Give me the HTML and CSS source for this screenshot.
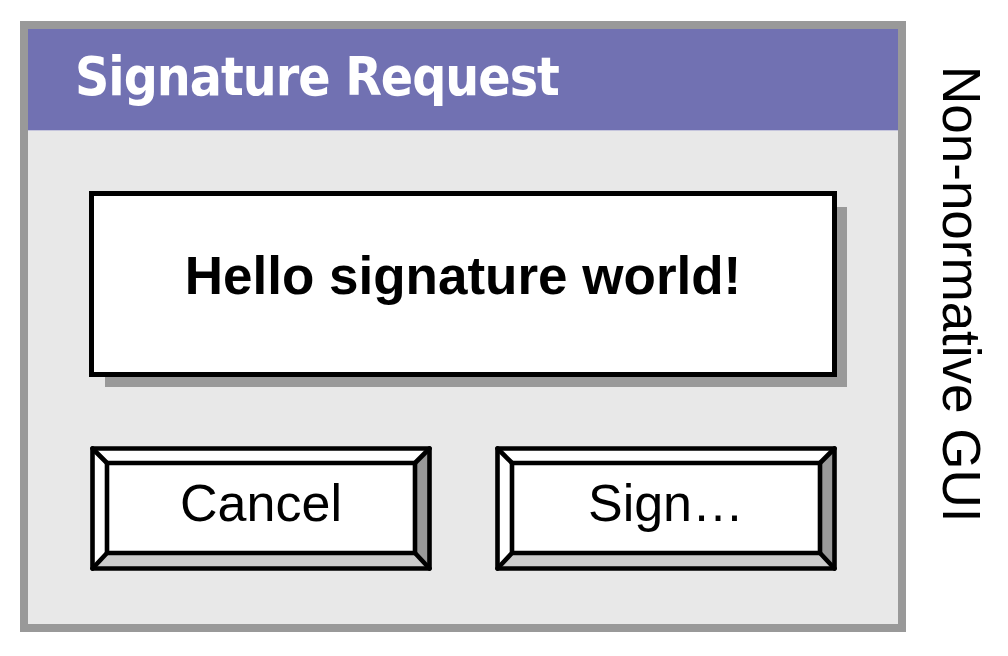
FILE: index.html
```html
<!DOCTYPE html>
<html>
<head>
<meta charset="utf-8">
<title>Signature Request</title>
<link rel="stylesheet" href="styles.css">
</head>
<body>
<div class="page">
  <div class="dialog">
    <div class="titlebar"><span class="title">Signature Request</span></div>
    <div class="content">
      <div class="message"><span class="message-text">Hello signature world!</span></div>
      <div class="buttons">
        <button class="btn" type="button">
          <svg class="bevel" width="342" height="125" viewBox="0 0 342 125">
            <polygon points="2,2 340,2 325,17 17,17" fill="#ffffff"/>
            <polygon points="2,2 17,17 17,107 2,123" fill="#ffffff"/>
            <polygon points="340,2 340,123 325,107 325,17" fill="#999999"/>
            <polygon points="2,123 340,123 325,107 17,107" fill="#cccccc"/>
            <rect x="17" y="17" width="308" height="90" fill="#ffffff"/>
            <g stroke="#000" stroke-width="4.6" stroke-linejoin="round" stroke-linecap="round" fill="none">
              <rect x="2.5" y="2.5" width="337" height="120"/>
              <rect x="17" y="17" width="308" height="90"/>
              <line x1="2.5" y1="2.5" x2="17" y2="17"/>
              <line x1="339.5" y1="2.5" x2="325" y2="17"/>
              <line x1="2.5" y1="122.5" x2="17" y2="107"/>
              <line x1="339.5" y1="122.5" x2="325" y2="107"/>
            </g>
          </svg>
          <span class="btn-label">Cancel</span>
        </button>
        <button class="btn" type="button">
          <svg class="bevel" width="342" height="125" viewBox="0 0 342 125">
            <polygon points="2,2 340,2 325,17 17,17" fill="#ffffff"/>
            <polygon points="2,2 17,17 17,107 2,123" fill="#ffffff"/>
            <polygon points="340,2 340,123 325,107 325,17" fill="#999999"/>
            <polygon points="2,123 340,123 325,107 17,107" fill="#cccccc"/>
            <rect x="17" y="17" width="308" height="90" fill="#ffffff"/>
            <g stroke="#000" stroke-width="4.6" stroke-linejoin="round" stroke-linecap="round" fill="none">
              <rect x="2.5" y="2.5" width="337" height="120"/>
              <rect x="17" y="17" width="308" height="90"/>
              <line x1="2.5" y1="2.5" x2="17" y2="17"/>
              <line x1="339.5" y1="2.5" x2="325" y2="17"/>
              <line x1="2.5" y1="122.5" x2="17" y2="107"/>
              <line x1="339.5" y1="122.5" x2="325" y2="107"/>
            </g>
          </svg>
          <span class="btn-label">Sign…</span>
        </button>
      </div>
    </div>
  </div>
  <div class="side-label">Non-normative GUI</div>
</div>
</body>
</html>
```

FILE: styles.css
```css
html, body {
  margin: 0;
  padding: 0;
  background: #ffffff;
}

body {
  width: 1008px;
  height: 656px;
  overflow: hidden;
  font-family: "Liberation Sans", Arial, sans-serif;
  color: #000;
}

.page {
  display: flex;
  align-items: flex-start;
  padding: 21px 0 0 20px;
}

.dialog {
  box-sizing: border-box;
  width: 886px;
  height: 611px;
  border: 8px solid #999999;
  background: #e8e8e8;
  display: flex;
  flex-direction: column;
}

.titlebar {
  box-sizing: border-box;
  height: 102px;
  background: #7171b2;
  border-bottom: 1px solid #c4c4dc;
  display: flex;
  align-items: center;
  padding: 0 0 6px 47px;
}

.title {
  font-family: "DejaVu Sans Condensed", "DejaVu Sans", sans-serif;
  font-stretch: condensed;
  font-weight: bold;
  font-size: 53px;
  letter-spacing: -1px;
  color: #ffffff;
  line-height: 1;
}

.content {
  padding: 60px 0 0 61px;
}

.message {
  box-sizing: border-box;
  width: 748px;
  height: 186px;
  border: 5px solid #000;
  background: #ffffff;
  box-shadow: 13px 13px 0 -3px #999999;
  display: flex;
  align-items: center;
  justify-content: center;
  padding-bottom: 17px;
}

.message-text {
  font-weight: bold;
  font-size: 53px;
  line-height: 53px;
}

.buttons {
  display: flex;
  justify-content: space-between;
  width: 747px;
  margin: 69px 0 0 1px;
}

.btn {
  display: grid;
  width: 342px;
  height: 125px;
  padding: 0;
  border: 0;
  background: none;
  font: inherit;
  color: inherit;
}

.bevel {
  grid-area: 1 / 1;
  display: block;
}

.btn-label {
  grid-area: 1 / 1;
  align-self: center;
  justify-self: center;
  font-size: 52px;
  line-height: 52px;
  margin-bottom: 11px;
}

.side-label {
  writing-mode: vertical-rl;
  font-size: 53px;
  line-height: 52px;
  margin: 45px 0 0 29px;
  white-space: nowrap;
}
```
